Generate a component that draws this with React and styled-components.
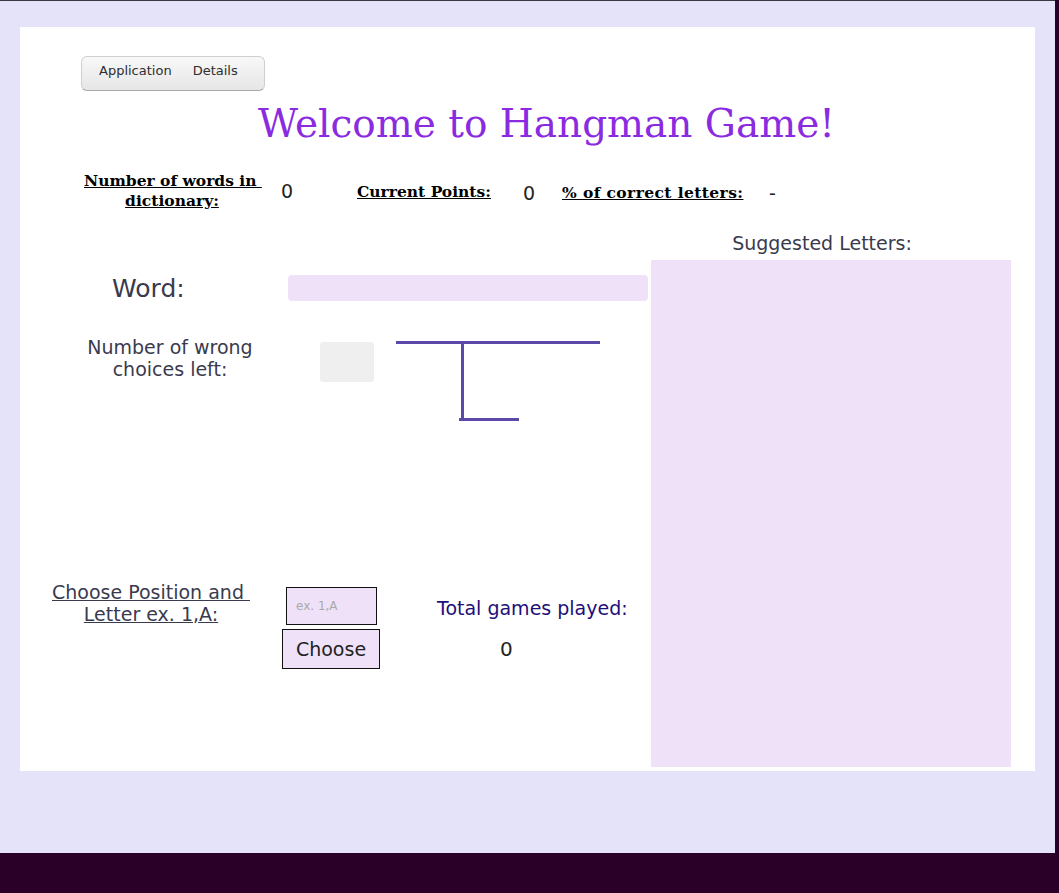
import React from "react";
import styled, { createGlobalStyle } from "styled-components";

const Global = createGlobalStyle`
  html, body { margin: 0; padding: 0; background: #2a0028; }
  body { font-family: "DejaVu Sans", sans-serif; }
  * { box-sizing: border-box; }
`;

const Screen = styled.div`
  width: 1059px;
  height: 893px;
  background: #2a0028;
  overflow: hidden;
`;

const Window = styled.div`
  width: 1055px;
  height: 853px;
  background: #e5e3fa;
  border-top: 1px solid #3a3a42;
  padding: 26px 20px 0 20px;
`;

const Panel = styled.div`
  width: 1015px;
  height: 744px;
  background: #ffffff;
  display: flex;
  flex-direction: column;
`;

const MenuBar = styled.div`
  margin: 29px 0 0 61px;
  width: 184px;
  height: 35px;
  border: 1px solid #cfcfcf;
  border-bottom-color: #a9a9a9;
  border-radius: 6px;
  background: linear-gradient(#f8f8f8, #e6e6e6);
  display: flex;
  align-items: center;
  padding: 0 0 6px 17px;
  gap: 21px;
`;

const MenuItem = styled.span`
  font-size: 13px;
  color: #2e2e2e;
`;

const Title = styled.h1`
  margin: 9px 0 0 0;
  padding-left: 38px;
  font-family: "DejaVu Serif", serif;
  font-weight: normal;
  font-size: 39px;
  line-height: 48px;
  color: #8a2be2;
  text-align: center;
`;

const StatsRow = styled.div`
  margin-top: 21px;
  display: flex;
  align-items: center;
  height: 44px;
`;

const StatLabel = styled.div`
  font-family: "DejaVu Serif", serif;
  font-weight: bold;
  font-size: 15.5px;
  line-height: 20px;
  color: #000;
  text-decoration: underline;
  text-align: center;
  white-space: nowrap;
  letter-spacing: ${(p) => p.$ls || 0}px;
  width: ${(p) => p.$w}px;
  margin-left: ${(p) => p.$ml || 0}px;
  padding-top: ${(p) => p.$pt || 0}px;
`;

const StatValue = styled.div`
  font-size: 19px;
  color: #222;
  width: ${(p) => p.$w}px;
  margin-left: ${(p) => p.$ml || 0}px;
  padding-top: ${(p) => p.$pt || 0}px;
`;

const Main = styled.div`
  display: flex;
  flex: 1;
  margin-top: 17px;
`;

const LeftCol = styled.div`
  width: 631px;
  display: flex;
  flex-direction: column;
`;

const RightCol = styled.div`
  width: 360px;
  display: flex;
  flex-direction: column;
  padding-top: 3px;
`;

const SuggestLabel = styled.div`
  font-size: 19px;
  line-height: 20px;
  color: #3a3a4e;
  text-align: center;
  padding-right: 18px;
  margin-bottom: 7px;
`;

const SuggestBox = styled.div`
  flex: 1;
  background: #efe1f8;
  margin-bottom: 4px;
`;

const WordRow = styled.div`
  margin-top: 40px;
  height: 36px;
  display: flex;
  align-items: center;
`;

const WordLabel = styled.div`
  width: 268px;
  padding-left: 92px;
  font-size: 25px;
  color: #3a3a4e;
`;

const WordField = styled.div`
  width: 360px;
  height: 26px;
  background: #efe1f8;
  border-radius: 4px;
`;

const WrongRow = styled.div`
  margin-top: 30px;
  display: flex;
  align-items: flex-start;
`;

const CenterLabel = styled.div`
  width: ${(p) => p.$w}px;
  font-size: 19px;
  line-height: 22px;
  color: #3a3a4e;
  text-align: center;
  white-space: nowrap;
  text-decoration: ${(p) => (p.$u ? "underline" : "none")};
`;

const CountBox = styled.div`
  margin-top: 6px;
  width: 54px;
  height: 40px;
  background: #efefef;
  border-radius: 3px;
`;

const Gallows = styled.svg`
  margin: 4px 0 0 22px;
  display: block;
`;

const ChooseRow = styled.div`
  margin-top: 157px;
  display: flex;
  align-items: flex-start;
`;

const ChooseCol = styled.div`
  width: 98px;
  display: flex;
  flex-direction: column;
  align-items: center;
  padding-top: 6px;
  gap: 4px;
`;

const PosInput = styled.input`
  width: 91px;
  height: 38px;
  margin-left: 1px;
  border: 1px solid #111;
  border-radius: 0;
  background: #efe1f8;
  font-family: "DejaVu Sans", sans-serif;
  font-size: 12px;
  padding: 0 9px;
  outline: none;
  &::placeholder { color: #aaa; }
`;

const ChooseButton = styled.button`
  width: 98px;
  height: 40px;
  border: 1px solid #111;
  border-radius: 0;
  background: #efe1f8;
  font-family: "DejaVu Sans", sans-serif;
  font-size: 19px;
  color: #222;
  padding: 0;
`;

const TotalCol = styled.div`
  display: flex;
  flex-direction: column;
  padding: 16px 0 0 57px;
`;

const TotalLabel = styled.div`
  font-size: 19px;
  line-height: 22px;
  color: #1e0f7a;
  white-space: nowrap;
`;

const TotalValue = styled.div`
  margin-top: 18px;
  padding-left: 63px;
  font-size: 20px;
  color: #222;
`;

export default function App() {
  return (
    <Screen>
      <Global />
      <Window>
        <Panel>
          <MenuBar>
            <MenuItem>Application</MenuItem>
            <MenuItem>Details</MenuItem>
          </MenuBar>
          <Title>Welcome to Hangman Game!</Title>
          <StatsRow>
            <StatLabel $w={176} $ml={64}>
              Number of words in&nbsp;
              <br />
              dictionary:
            </StatLabel>
            <StatValue $w={76} $ml={21}>0</StatValue>
            <StatLabel $w={132} $pt={2}>Current Points:</StatLabel>
            <StatValue $w={39} $ml={34} $pt={4}>0</StatValue>
            <StatLabel $w={181} $pt={4} $ls={0.4}>% of correct letters:</StatLabel>
            <StatValue $w={30} $ml={26} $pt={4}>-</StatValue>
          </StatsRow>
          <Main>
            <LeftCol>
              <WordRow>
                <WordLabel>Word:</WordLabel>
                <WordField />
              </WordRow>
              <WrongRow>
                <CenterLabel $w={300}>
                  Number of wrong
                  <br />
                  choices left:
                </CenterLabel>
                <CountBox />
                <Gallows width="206" height="84" viewBox="0 0 206 84">
                  <g fill="#5b48a8">
                    <rect x="0" y="1" width="204" height="3" />
                    <rect x="65" y="2" width="3" height="79" />
                    <rect x="63" y="78" width="60" height="3" />
                  </g>
                </Gallows>
              </WrongRow>
              <ChooseRow>
                <CenterLabel $w={262} $u>
                  Choose Position and&nbsp;
                  <br />
                  Letter ex. 1,A:
                </CenterLabel>
                <ChooseCol>
                  <PosInput placeholder="ex. 1,A" />
                  <ChooseButton>Choose</ChooseButton>
                </ChooseCol>
                <TotalCol>
                  <TotalLabel>Total games played:</TotalLabel>
                  <TotalValue>0</TotalValue>
                </TotalCol>
              </ChooseRow>
            </LeftCol>
            <RightCol>
              <SuggestLabel>Suggested Letters:</SuggestLabel>
              <SuggestBox />
            </RightCol>
          </Main>
        </Panel>
      </Window>
    </Screen>
  );
}
